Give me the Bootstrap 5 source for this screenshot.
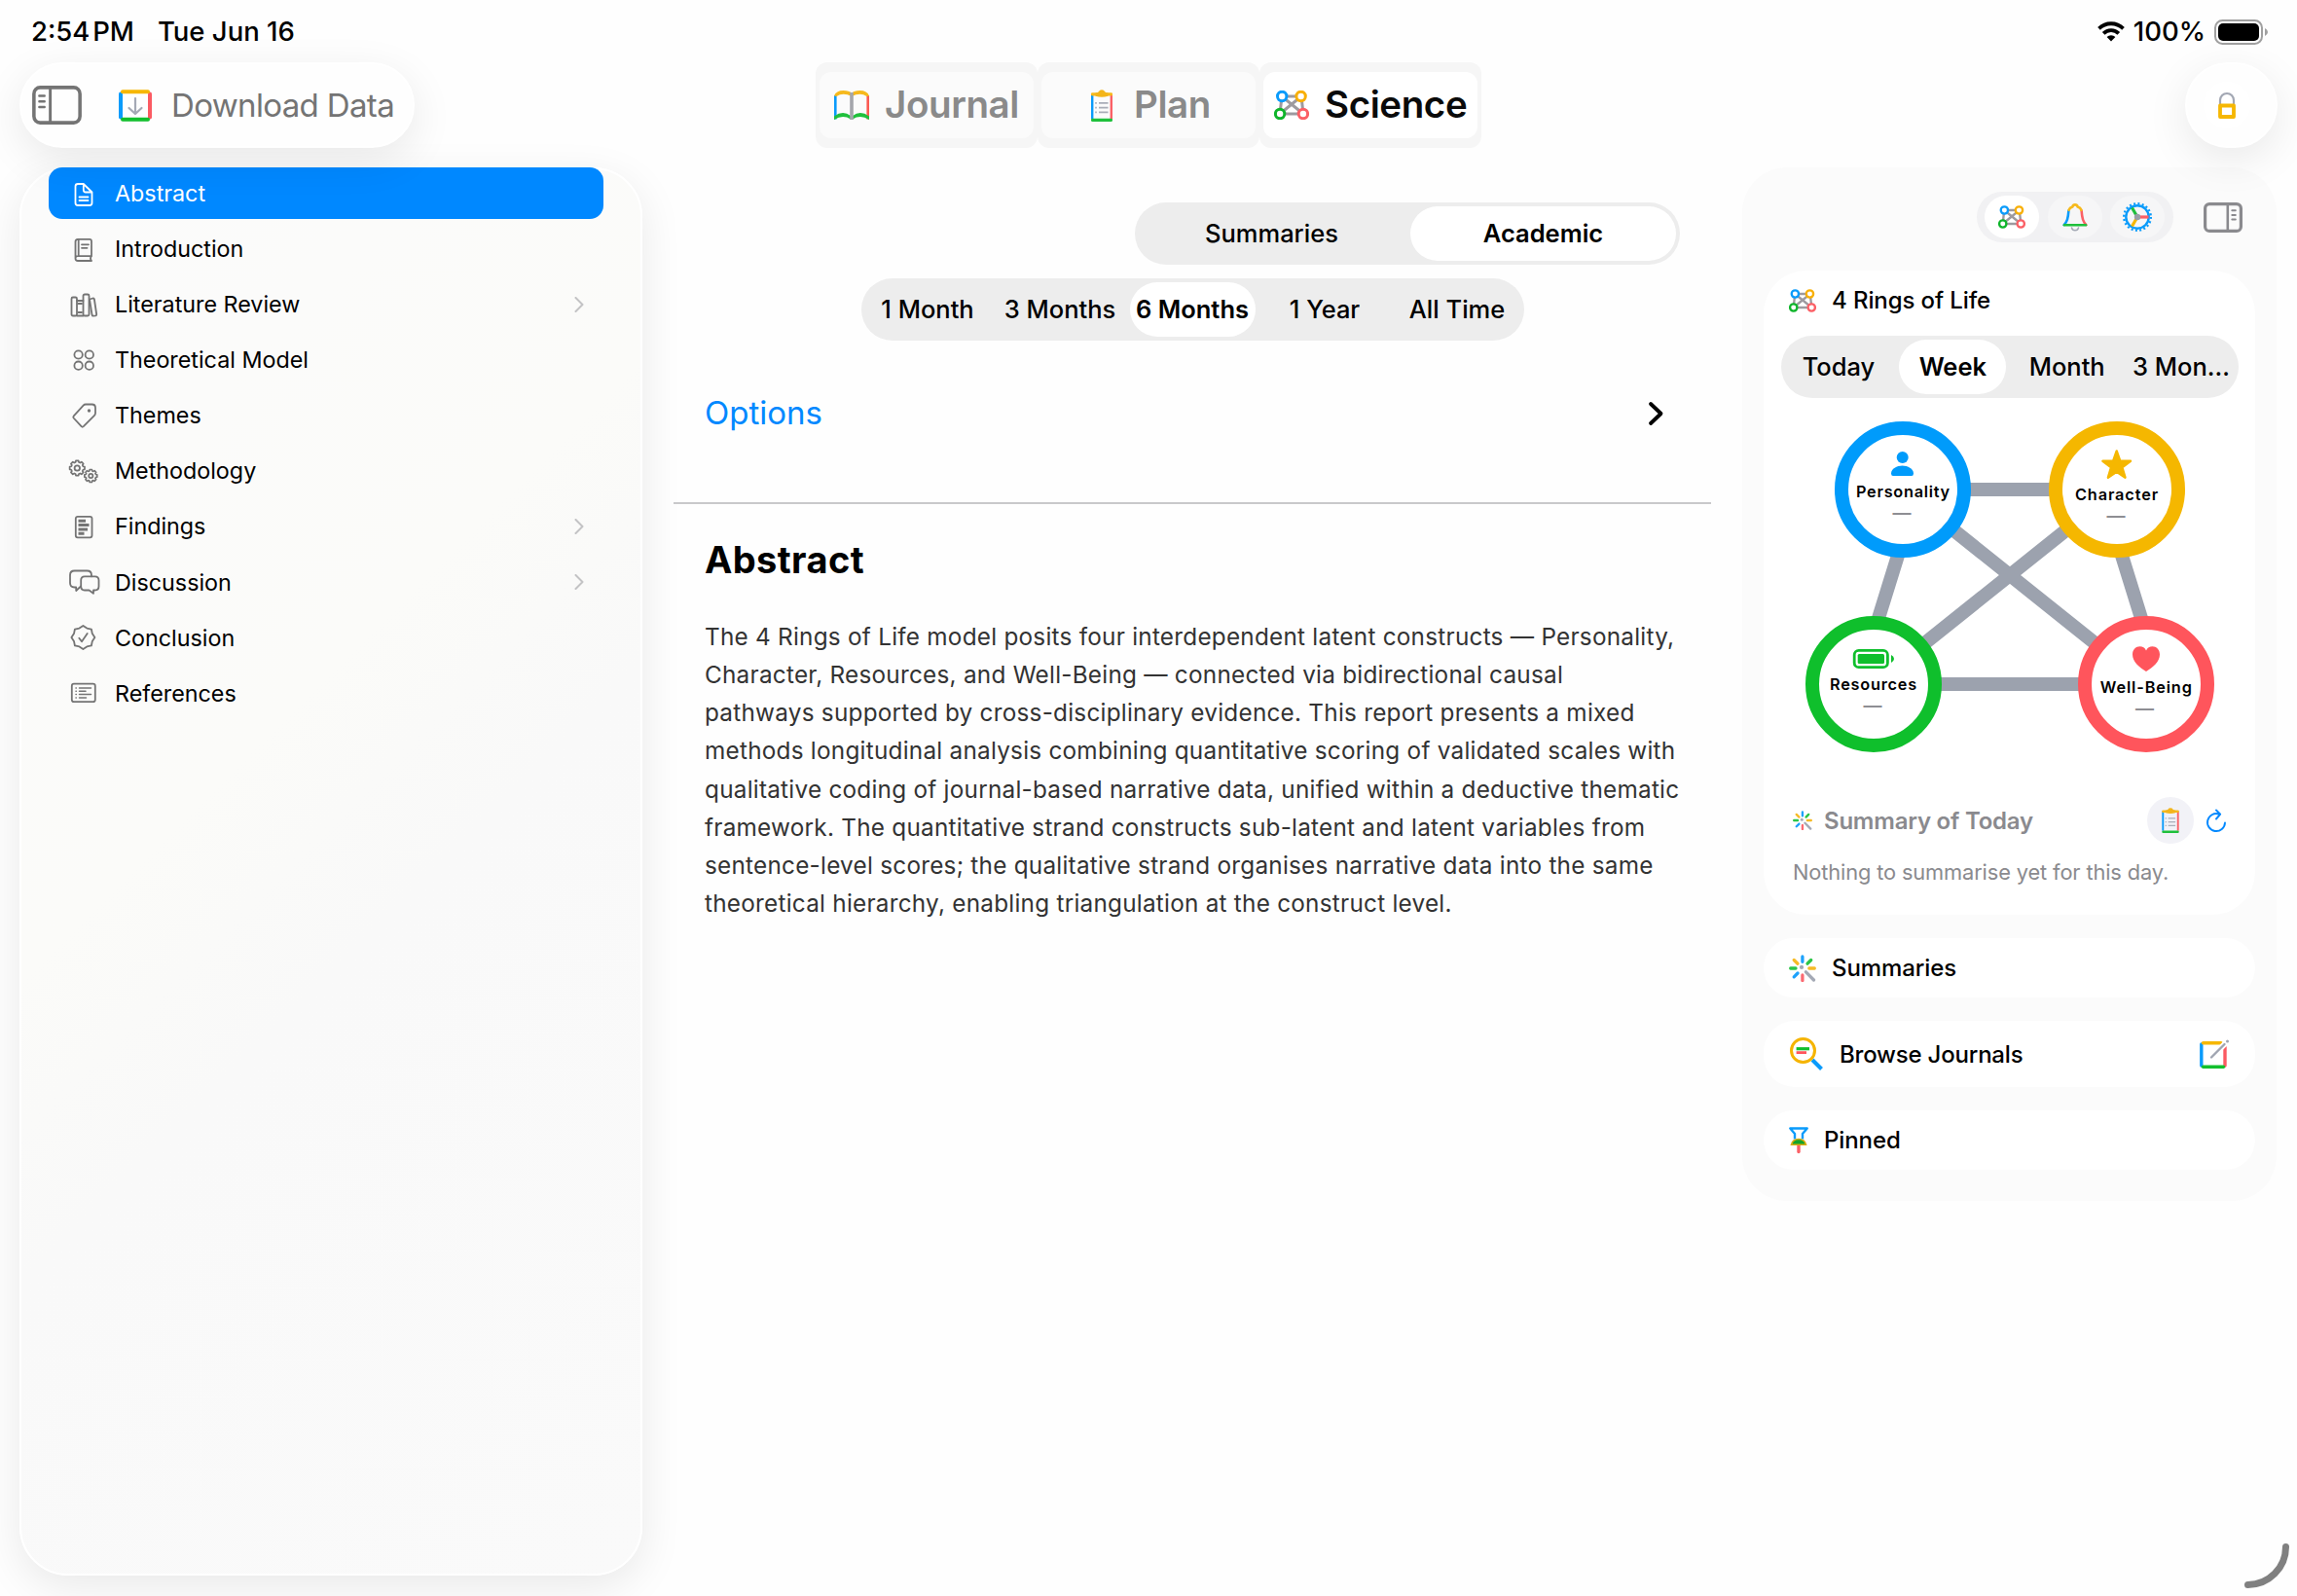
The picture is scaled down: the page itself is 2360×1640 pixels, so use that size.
<!DOCTYPE html>
<html lang="en">
<head>
<meta charset="utf-8">
<title>4 Rings of Life – Science</title>
<link href="https://cdn.jsdelivr.net/npm/bootstrap@5.3.0/dist/css/bootstrap.min.css" rel="stylesheet">
<style>
  body{font-family:Inter,"Liberation Sans",sans-serif;background:#fefefe;color:#000;width:2360px;height:1640px;overflow:hidden;line-height:1}
  svg{display:block;flex:none;overflow:visible}
  .statusbar{height:64px;padding:1px 29px 0 32px;font-size:27.5px;font-weight:500}
  .clock{word-spacing:-4.5px}
  .today{margin-left:24px}
  .toolbar{height:88px;display:grid;grid-template-columns:1fr auto 1fr;padding:0 20px;position:relative;z-index:2}
  .glass{background:#fefefe;border:2px solid #fff;box-shadow:0 12px 44px rgba(0,0,0,.085)}
  .pill-download{width:406px;border-radius:44px;padding-left:11px;color:#747474;font-size:33px;letter-spacing:-.65px}
  .pill-lock{width:95px;border-radius:47px;padding-left:17px}
  .lock-disc{width:48px;height:48px;border-radius:50%;background:#fff}
  .tab-cell{width:228px;height:88px;border-radius:12px;background:#f6f6f6;padding:10px 4px}
  .tab-face{height:68px;border-radius:12px;background:#fbfbfb;color:#8a8a8a;font-size:38.5px;font-weight:600;letter-spacing:-.4px}
  .tab-face span{margin-top:-2px}
  .tab-cell.current .tab-face{background:#fff;color:#0a0a0a}
  .workspace{margin-top:20px;padding:0 20px;gap:32px}
  .outline-panel{width:640px;height:1447px;border-radius:50px;background:linear-gradient(135deg,#fbfbfb 0,#fbfbf9 40%,#f9f9f9 55%,#fafafa 100%);padding:0 38px 0 28px}
  .outline-link{height:53px;margin-bottom:4.1px;padding:0 20px 0 18px;border-radius:14px;font-size:23.3px;color:#000;gap:14px}
  .outline-link .glyph{color:#747474;stroke:currentColor;fill:none;stroke-width:1.8;stroke-linejoin:round;stroke-linecap:round}
  .outline-link.current{background:#0088ff;color:#fff;margin-top:-2px}
  .outline-link.current .glyph{color:#fff}
  .reading{width:1066px;padding-top:36px}
  .segmented{height:64px;border-radius:32px;background:#ededed;padding:4px;font-size:25.5px;font-weight:480}
  .segmented>div{border-radius:28px;white-space:nowrap}
  .segmented>.on{background:#fff;font-weight:600}
  .seg-kind{width:560px;margin-right:32px}
  .seg-kind>div{flex:0 0 273px}
  .seg-range{width:681px;margin-top:14px}
  .seg-range>div{flex:0 0 129px}
  .seg-rings{width:470px;margin:16px 0 0 18px}
  .seg-rings>div{flex:0 0 110px}
  .options{margin-top:37px;height:75px;padding:0 48px 0 32px;font-size:33px;color:#0088ff}
  .rule{height:2px;background:#c9c9cb;margin-top:54px}
  .article{padding:38px 0 0 32px}
  .article h1{font-size:38px;font-weight:700;line-height:38px;letter-spacing:.4px;margin:0 0 41px}
  .article p{font-size:24.3px;line-height:39.15px;letter-spacing:.25px;color:#333;white-space:nowrap;margin:0}
  .side-panel{width:549px;height:1062px;border-radius:46px;background:#fbfbfb;padding:25px 22px 0}
  .mode-pill{width:202px;height:52px;border-radius:26px;background:#f1f1f3;padding:4px 9px 4px 8px}
  .mode-pill>div{width:56px;height:44px;border-radius:22px;background:#f6f6f7}
  .mode-pill>.on{background:#fff}
  .tile{background:#fff;border-radius:32px;font-size:24px;font-weight:500;letter-spacing:-.1px}
  .tile .segmented{letter-spacing:0}
  .rings-tile{height:662px;border-radius:44px;margin-top:29px;padding-top:11px}
  .quiet{color:#8a8a8e}
  .disc{width:48px;height:48px;border-radius:50%;background:#f2f2f7}
  .corner{position:absolute;right:8px;bottom:8px}
</style>
</head>
<body class="position-relative">
<svg width="0" height="0" class="position-absolute">
  <defs>
    <symbol id="rings" viewBox="0 0 36 30">
      <g stroke="#9d9a9f" stroke-width="3" fill="none"><path d="M8 6H28M6 24H30M8 6L6 24M28 6L30 24M8 6L30 24M28 6L6 24"/></g>
      <g fill="#fff" stroke-width="3"><circle cx="8.2" cy="6" r="4.7" stroke="#0a9bfb"/><circle cx="27.6" cy="6" r="4.7" stroke="#f8af05"/><circle cx="6.1" cy="24" r="4.7" stroke="#0fb52b"/><circle cx="29.9" cy="24" r="4.7" stroke="#fb6066"/></g>
    </symbol>
    <symbol id="clip" viewBox="0 0 22 33">
      <path d="M1.2 4.5V30" stroke="#0a9bfb" stroke-width="2.4"/><path d="M20.8 4.5V30" stroke="#fb6066" stroke-width="2.4"/>
      <path d="M1.5 31.3H20.5" stroke="#1fc03c" stroke-width="3.2" stroke-linecap="round"/>
      <path d="M1.4 4.8H20.6" stroke="#f6b91c" stroke-width="3.2" stroke-linecap="round"/>
      <path d="M4.5 6.8V3.6Q7.5 3.4 8 2Q8.6 .2 11 .2T14 2Q14.5 3.4 17.5 3.6V6.8Q11 8.5 4.5 6.8Z" fill="#f3b51a"/>
      <path d="M8 13.8H17.5M8 18.6H17.5M8 23.4H17.5M4.2 13.8H5.8M4.2 18.6H5.8M4.2 23.4H5.8" stroke="#a9adb8" stroke-width="1.7"/>
    </symbol>
    <symbol id="spark" viewBox="0 0 28 28">
      <g stroke-width="3.3" stroke-linecap="round" fill="none">
        <path d="M13.9 2V7.3M9 19L5.2 22.8" stroke="#1ea2fb"/><path d="M19 9.2L22.7 5.5M1.7 14H7" stroke="#2cc548"/>
        <path d="M20.8 14H26.3M5.2 5.5L9 9.2" stroke="#f6bb27"/><path d="M13.9 21V26.5" stroke="#fb6a72"/><path d="M17.5 17.8L25.5 26" stroke="#a4a9b5"/>
      </g><circle cx="13" cy="12.9" r="2.1" fill="#a4a9b5"/>
    </symbol>
    <path id="cog" d="M9.85-1.74V1.74L7.69 2.21 7 3.88 8.19 5.74 5.74 8.19 3.88 7 2.21 7.69 1.74 9.85H-1.74L-2.21 7.69-3.88 7-5.74 8.19-8.19 5.74-7 3.88-7.69 2.21-9.85 1.74V-1.74L-7.69-2.21-7-3.88-8.19-5.74-5.74-8.19-3.88-7-2.21-7.69-1.74-9.85H1.74L2.21-7.69 3.88-7 5.74-8.19 8.19-5.74 7-3.88 7.69-2.21Z"/>
    <symbol id="chev" viewBox="0 0 10 16"><path d="M1.5 1L8.5 8 1.5 15" fill="none" stroke="#c3c3c5" stroke-width="2" stroke-linecap="round" stroke-linejoin="round"/></symbol>
  </defs>
</svg>

<header class="statusbar d-flex align-items-center">
  <span class="clock">2:54 PM</span><span class="today me-auto">Tue Jun 16</span>
  <svg width="28" height="21" viewBox="0 0 28 21" style="margin-right:9px"><g fill="none" stroke="#000" stroke-width="3.8"><path d="M1.5 7.3A18 18 0 0 1 26.5 7.3"/><path d="M6.2 12.3A11 11 0 0 1 21.8 12.3"/></g><path d="M14 20.5L9.6 16A6.3 6.3 0 0 1 18.4 16Z"/></svg>
  <span>100%</span>
  <svg width="56" height="26" viewBox="0 0 56 26" style="margin-left:9px"><rect x="1" y="1" width="48" height="24" rx="7.5" fill="none" stroke="#a0a0a0" stroke-width="2"/><rect x="4" y="4" width="42" height="18" rx="5" fill="#000"/><path d="M52 9Q55 10.5 55 13T52 17Z" fill="#a0a0a0"/></svg>
</header>

<nav class="toolbar">
  <div class="pill-download glass d-flex align-items-center">
    <svg width="51" height="40" viewBox="0 0 52 40" preserveAspectRatio="none" fill="none" stroke="#747474"><rect x="1.9" y="1.9" width="48.2" height="36.2" rx="6.5" stroke-width="3.6"/><path d="M19 2V38" stroke-width="3"/><path d="M7.5 10.5H13M7.5 16.3H13M7.5 22H13" stroke-width="2.4" stroke-linecap="round"/></svg>
    <svg width="34" height="33" viewBox="0 0 34 33" fill="none" stroke-width="4" style="margin-left:38px"><path d="M2 4.5V28.5" stroke="#0a9bfb" stroke-linecap="round"/><path d="M32 4.5V28.5" stroke="#fb5a62" stroke-linecap="round"/><path d="M4 2.2H30" stroke="#f6b703" stroke-linecap="round"/><path d="M4 30.8H30" stroke="#12bf2d" stroke-linecap="round"/><path d="M17 9V24.5M10.5 19L17 25 23.5 19" stroke="#a4a9b5" stroke-width="2.2" stroke-linecap="round" stroke-linejoin="round"/></svg>
    <span style="margin-left:20px">Download Data</span>
  </div>
  <div class="d-flex">
    <div class="tab-cell"><div class="tab-face d-flex align-items-center" style="padding-left:15px">
      <svg width="36" height="30" viewBox="0 0 36 30" fill="none"><path d="M1.3 5V29.5" stroke="#0a9bfb" stroke-width="2.6"/><path d="M34.7 5V29.5" stroke="#fb5a52" stroke-width="2.6"/><path d="M0 30V26.5Q9 20 17 26V29.5Q9 24.5 0 30ZM36 30V26.5Q27 20 19 26V29.5Q27 24.5 36 30Z" fill="#1fc03c"/><path d="M0 5.5Q2 0 9.5 0Q15.5 0 18 2.5Q20.5 0 26.5 0Q34 0 36 5.5L33.5 6Q27 1.5 18 6Q9 1.5 2.5 6Z" fill="#f6b91c"/><path d="M18 2V30" stroke="#a4a6ac" stroke-width="3.6"/></svg>
      <span style="margin-left:16px">Journal</span></div></div>
    <div class="tab-cell"><div class="tab-face d-flex align-items-center" style="padding-left:51px"><svg width="22" height="33"><use href="#clip"/></svg><span style="margin-left:22px">Plan</span></div></div>
    <div class="tab-cell current"><div class="tab-face d-flex align-items-center" style="padding-left:11px"><svg width="36" height="30"><use href="#rings"/></svg><span style="margin-left:16px">Science</span></div></div>
  </div>
  <div class="pill-lock glass d-flex align-items-center ms-auto"><div class="lock-disc d-flex align-items-center justify-content-center"><svg width="18" height="27" viewBox="0 0 18 27" fill="none"><path d="M2 13V8a7 7 0 0 1 14 0V13" stroke="#a2a7b3" stroke-width="2.2"/><rect x="2" y="13.5" width="14" height="11.5" stroke="#f6b703" stroke-width="3.8" stroke-linejoin="round"/></svg></div></div>
</nav>

<main class="workspace d-flex">
  <aside class="outline-panel glass">
    <a class="outline-link current d-flex align-items-center text-decoration-none"><svg class="glyph" width="36" height="36"><path d="M12 8H17.8L26.5 16.5V27.5Q26.5 30 24 30H12Q9.5 30 9.5 27.5V10.5Q9.5 8 12 8ZM17.8 8V14Q17.8 16.5 20 16.5H26.5M13.5 21.5H22.5M13.5 25H22.5"/></svg><span>Abstract</span></a>
    <a class="outline-link d-flex align-items-center text-decoration-none"><svg class="glyph" width="36" height="36"><path d="M26 25.2V10Q26 7.8 24 7.8H12Q9.5 7.8 9.5 10.5V27.5Q9.5 30 12 30H26M26 25.2H12Q9.5 25.2 9.5 27.5M26 25.2Q24 27.5 26 30M12.7 8V25M16 13.3H23M16 16.8H21.5"/></svg><span>Introduction</span></a>
    <a class="outline-link d-flex align-items-center text-decoration-none"><svg class="glyph" width="36" height="36"><rect x="5.5" y="10.5" width="5.5" height="19" rx="1.5"/><path d="M11 14H17.5M11 29.5H17.5M12.5 17H16M12.5 26H16"/><rect x="17.5" y="7.5" width="6" height="22" rx="1.5"/><path d="M24 12.5L27.5 11.5Q28.6 11.3 28.9 12.5L31.2 28Q31.3 29 30.3 29.3L27.8 29.6Q26.8 29.7 26.6 28.8Z"/></svg><span>Literature Review</span><svg class="ms-auto" width="10" height="16"><use href="#chev"/></svg></a>
    <a class="outline-link d-flex align-items-center text-decoration-none"><svg class="glyph" width="36" height="36"><circle cx="12.6" cy="12.5" r="4.2"/><circle cx="23.8" cy="12.5" r="4.2"/><circle cx="12.6" cy="23.7" r="4.2"/><circle cx="23.8" cy="23.7" r="4.2"/></svg><span>Theoretical Model</span></a>
    <a class="outline-link d-flex align-items-center text-decoration-none"><svg class="glyph" width="36" height="36"><path d="M20 6.5H26.5Q30 6.5 30 10V15.5Q30 17 28.8 18.2L17.8 29.2Q16.7 30.2 15.6 29.2L7.6 20.5Q6.8 19.5 7.8 18.4L17.6 7.6Q18.6 6.5 20 6.5Z"/><circle cx="23.5" cy="13" r=".8" fill="#747474"/></svg><span>Themes</span></a>
    <a class="outline-link d-flex align-items-center text-decoration-none"><svg class="glyph" width="36" height="36"><use href="#cog" transform="translate(11.3 15) scale(.78)" stroke-width="2.2"/><circle cx="11.3" cy="15" r="2.7"/><use href="#cog" transform="translate(25.3 23) scale(.66)" stroke-width="2.5"/><circle cx="25.3" cy="23" r="2.1"/></svg><span>Methodology</span></a>
    <a class="outline-link d-flex align-items-center text-decoration-none"><svg class="glyph" width="36" height="36"><rect x="9.8" y="7.8" width="16.7" height="21.5" rx="2"/><path d="M12.5 12.3H20M12.5 16.6H23.5M12.5 20.9H22M12.5 25.2H18.5" stroke-width="3" stroke-linecap="butt"/></svg><span>Findings</span><svg class="ms-auto" width="10" height="16"><use href="#chev"/></svg></a>
    <a class="outline-link d-flex align-items-center text-decoration-none"><svg class="glyph" width="36" height="36"><path d="M15 22.5L10.2 27V23.5H8.5Q4 23.5 4 19V11Q4 6.5 8.5 6.5H21.5Q26 6.5 26 11V12.3"/><path d="M19 12.3H29.5Q33.500 12.3 33.5 16.3V22.5Q33.5 26.5 29.5 26.5H28V29.8L23.5 26.5H19Q15.2 26.5 15.2 22.5V16.3Q15.2 12.3 19 12.3Z"/></svg><span>Discussion</span><svg class="ms-auto" width="10" height="16"><use href="#chev"/></svg></a>
    <a class="outline-link d-flex align-items-center text-decoration-none"><svg class="glyph" width="36" height="36"><path transform="translate(17.4 18)" d="M12 0L9.4 3.9 8.49 8.49 3.9 9.4 0 12-3.9 9.4-8.49 8.49-9.4 3.9-12 0-9.4-3.9-8.49-8.49-3.9-9.4 0-12 3.9-9.4 8.49-8.49 9.4-3.9Z"/><path d="M13.3 18.8L16 22.3 21.7 14"/></svg><span>Conclusion</span></a>
    <a class="outline-link d-flex align-items-center text-decoration-none"><svg class="glyph" width="36" height="36"><rect x="5.8" y="8.7" width="24" height="18.5" rx="2.2"/><path d="M13.5 13H25.5M13.5 16.3H20M13.5 19.6H25.5M13.5 22.9H20.5M10 13H10.3M10 16.3H10.3M10 19.6H10.3M10 22.9H10.3" stroke-width="1.5"/></svg><span>References</span></a>
  </aside>

  <section class="reading">
    <div class="segmented seg-kind d-flex justify-content-between ms-auto">
      <div class="d-flex align-items-center justify-content-center">Summaries</div>
      <div class="on d-flex align-items-center justify-content-center">Academic</div>
    </div>
    <div class="segmented seg-range d-flex justify-content-between mx-auto">
      <div class="d-flex align-items-center justify-content-center">1 Month</div>
      <div class="d-flex align-items-center justify-content-center">3 Months</div>
      <div class="on d-flex align-items-center justify-content-center">6 Months</div>
      <div class="d-flex align-items-center justify-content-center">1 Year</div>
      <div class="d-flex align-items-center justify-content-center">All Time</div>
    </div>
    <div class="options d-flex align-items-center justify-content-between"><span>Options</span><svg width="17" height="26" viewBox="0 0 17 26"><path d="M3 3L13.5 13 3 23" fill="none" stroke="#000" stroke-width="3.8" stroke-linecap="round" stroke-linejoin="round"/></svg></div>
    <div class="rule"></div>
    <article class="article">
      <h1>Abstract</h1>
      <p>The 4 Rings of Life model posits four interdependent latent constructs — Personality,<br>
      Character, Resources, and Well-Being — connected via bidirectional causal<br>
      pathways supported by cross-disciplinary evidence. This report presents a mixed<br>
      methods longitudinal analysis combining quantitative scoring of validated scales with<br>
      qualitative coding of journal-based narrative data, unified within a deductive thematic<br>
      framework. The quantitative strand constructs sub-latent and latent variables from<br>
      sentence-level scores; the qualitative strand organises narrative data into the same<br>
      theoretical hierarchy, enabling triangulation at the construct level.</p>
    </article>
  </section>

  <aside class="side-panel">
    <div class="d-flex align-items-center justify-content-end" style="padding-right:13px">
      <div class="mode-pill d-flex justify-content-between">
        <div class="on d-flex align-items-center justify-content-center"><svg width="28" height="24"><use href="#rings"/></svg></div>
        <div class="d-flex align-items-center justify-content-center"><svg width="26" height="28" viewBox="0 0 26 28" fill="none" stroke-width="2.6" stroke-linecap="round" stroke-linejoin="round"><path d="M9.5 25A3.6 3.6 0 0 0 16.5 25" stroke="#a4a9b5" stroke-width="1.5"/><path d="M6.4 7.5Q6 13 5 16.5 4.3 19 1.7 22" stroke="#0a9bfb"/><path d="M19.6 7.5Q20 13 21 16.5 21.7 19 24.3 22" stroke="#fb6066"/><path d="M6.6 6.8Q7.5 4.5 10.3 3.6 10.9 1.4 13 1.4T15.7 3.6Q18.5 4.5 19.4 6.8" stroke="#f6b91c"/><path d="M2 22.3H24" stroke="#1fc03c"/></svg></div>
        <div class="d-flex align-items-center justify-content-center"><svg width="30" height="30" viewBox="0 0 30 30" fill="none"><circle cx="15" cy="15" r="11.7" stroke="#0a9bfb" stroke-width="2.4"/><circle cx="15" cy="15" r="13.8" stroke="#0a9bfb" stroke-width="2.4" stroke-dasharray="2 2.335"/><path d="M15 15L9.5 5.5" stroke="#1fc03c" stroke-width="3.2"/><path d="M15 15L9.5 24.5" stroke="#f6b703" stroke-width="3.2"/><path d="M15 15H26.500" stroke="#fb6066" stroke-width="3.2"/><circle cx="15" cy="15" r="3.2" fill="#9a9da6"/></svg></div>
      </div>
      <svg width="40" height="31" viewBox="0 0 40 31" fill="none" stroke="#8a8a8e" style="margin-left:31px"><rect x="1.6" y="1.6" width="36.8" height="27.8" rx="4.5" stroke-width="3.2"/><path d="M24.8 2V29" stroke-width="2.6"/><path d="M29.3 8.3H32.8M29.3 13H32.8M29.3 17.6H32.8" stroke-width="2" stroke-linecap="round"/></svg>
    </div>

    <div class="tile rings-tile">
      <div class="d-flex align-items-center" style="padding-left:26px;height:40px"><svg width="28" height="24"><use href="#rings"/></svg><span style="margin-left:16px">4 Rings of Life</span></div>
      <div class="segmented seg-rings d-flex justify-content-between">
        <div class="d-flex align-items-center justify-content-center">Today</div>
        <div class="on d-flex align-items-center justify-content-center">Week</div>
        <div class="d-flex align-items-center justify-content-center">Month</div>
        <div class="d-flex align-items-center justify-content-center">3 Mon…</div>
      </div>
      <svg width="505" height="390" viewBox="1812 409 505 390" font-size="16.3" font-weight="580" text-anchor="middle">
        <path d="M1955 503H2175M1925 703H2205M1971 503L1909 703M2159 503L2221 703M1955 503L2205 703M2175 503L1925 703" stroke="#9ca2ae" stroke-width="14"/>
        <g fill="#fff" stroke-width="14"><circle cx="1955" cy="503" r="63" stroke="#009bfb"/><circle cx="2175" cy="503" r="63" stroke="#f5b700"/><circle cx="1925" cy="703" r="63" stroke="#0fbf2c"/><circle cx="2205" cy="703" r="63" stroke="#ff555c"/></g>
        <g fill="#009bfb"><circle cx="1954.7" cy="470" r="6"/><path d="M1943 486.5C1943 481.5 1949 478.5 1954.5 478.5S1966 481.5 1966 486.5Q1966 489 1964 489H1945Q1943 489 1943 486.5Z"/></g>
        <path d="M2174.7 463.5L2178.2 473.5 2189 473.7 2180.4 480.3 2183.5 490.7 2174.7 484.7 2165.900 490.7 2169 480.3 2160.4 473.7 2171.2 473.5Z" fill="#f5b700" stroke="#f5b700" stroke-width="2.4" stroke-linejoin="round"/>
        <rect x="1905.2" y="668.3" width="34.2" height="17.4" rx="4.5" fill="none" stroke="#0fbf2c" stroke-width="2.8"/><rect x="1908.7" y="672" width="27.3" height="10" rx="1.5" fill="#0fbf2c"/><path d="M1943 673Q1946 674.5 1946 677T1943 681Z" fill="#0fbf2c"/>
        <path d="M2205 690C2198 685.5 2191 680 2191 672.5C2191 667.5 2194.5 664.3 2198.5 664.3Q2203 664.3 2205 668.5Q2207 664.3 2211.5 664.3C2215.5 664.3 2219 667.5 2219 672.5C2219 680 2212 685.5 2205 690Z" fill="#ff555c"/>
        <g fill="#000"><text x="1955" y="511" textLength="96">Personality</text><text x="2174.5" y="514" textLength="85">Character</text><text x="1924.500" y="709" textLength="89">Resources</text><text x="2204.8" y="712" textLength="94">Well-Being</text></g>
        <g fill="#8e8e93" font-weight="600" font-size="19"><text x="1954" y="534">—</text><text x="2174" y="537">—</text><text x="1924" y="732">—</text><text x="2203.5" y="735">—</text></g>
      </svg>
      <div class="d-flex align-items-center quiet" style="padding:0 30px 0 30px;height:48px;margin-top:20px"><svg width="20" height="20"><use href="#spark"/></svg><span style="margin:2px 0 0 12px;font-weight:600;letter-spacing:-.22px">Summary of Today</span>
        <div class="disc d-flex align-items-center justify-content-center ms-auto"><svg width="18" height="26"><use href="#clip"/></svg></div>
        <svg width="20" height="25" viewBox="0 0 20 25" style="margin-left:13px" fill="none" stroke="#0088ff" stroke-width="1.9" stroke-linecap="round" stroke-linejoin="round"><path d="M12.8 5.5A9 9 0 1 0 19 14.5M10 1.5L14.2 5.7 10 10.5"/></svg></div>
      <div class="quiet" style="padding-left:30px;margin-top:18px;font-size:21.8px;line-height:22px;font-weight:400;letter-spacing:-.12px">Nothing to summarise yet for this day.</div>
    </div>

    <div class="tile d-flex align-items-center" style="height:61px;margin-top:24px;padding-left:26px"><svg width="28" height="28"><use href="#spark"/></svg><span style="margin-left:16px">Summaries</span></div>
    <div class="tile d-flex align-items-center" style="height:68px;margin-top:24px;padding:0 27px"><svg width="34" height="34" viewBox="0 0 34 34" fill="none"><path d="M23 23L32.5 32.5" stroke="#0a9bfb" stroke-width="4"/><circle cx="13.5" cy="13.5" r="12" stroke="#f5b400" stroke-width="3"/><path d="M6.6 11.7H20" stroke="#0fbf2c" stroke-width="3.2"/><path d="M6.6 15.6H17" stroke="#ff555c" stroke-width="2.8"/></svg><span style="margin:1px 0 0 17px;letter-spacing:-.2px">Browse Journals</span>
      <svg class="ms-auto" width="30" height="30" viewBox="0 0 30 30" fill="none" stroke-linecap="round" stroke-width="3.4"><path d="M1.8 5V27" stroke="#0a9bfb"/><path d="M26 8V27" stroke="#fb5a62"/><path d="M3.5 3.8H22" stroke="#f6b703"/><path d="M3.5 28.3H24.5" stroke="#12bf2d"/><path d="M12 18.5L26 4.5" stroke="#fff" stroke-width="6"/><path d="M12 18.5L25.5 5" stroke="#a0a5b1" stroke-width="2.4"/><circle cx="28.5" cy="2" r="1.5" fill="#a0a5b1"/></svg></div>
    <div class="tile d-flex align-items-center" style="height:61px;margin-top:24px;padding-left:26px"><svg width="20" height="27" viewBox="0 0 20 27" fill="none"><path d="M6 12.5V7L1.3 1.5H18.7L14 7V12.5" stroke="#0a9bfb" stroke-width="2.4" stroke-linejoin="round"/><path d="M10 18.5V25.5" stroke="#fb6066" stroke-width="3.4" stroke-linecap="round"/><path d="M2.5 18.2Q4 12.5 10 12.5T17.5 18.2Z" fill="#12a52a" stroke="#d9ac10" stroke-width="1.6"/></svg><span style="margin-left:16px">Pinned</span></div>
  </aside>
</main>
<svg class="corner" width="46" height="46" viewBox="0 0 46 46"><path d="M3.5 42.5A39 39 0 0 0 42.5 3.5" fill="none" stroke="#808080" stroke-width="7" stroke-linecap="round"/></svg>
<script src="https://cdn.jsdelivr.net/npm/bootstrap@5.3.0/dist/js/bootstrap.bundle.min.js"></script>
</body>
</html>
